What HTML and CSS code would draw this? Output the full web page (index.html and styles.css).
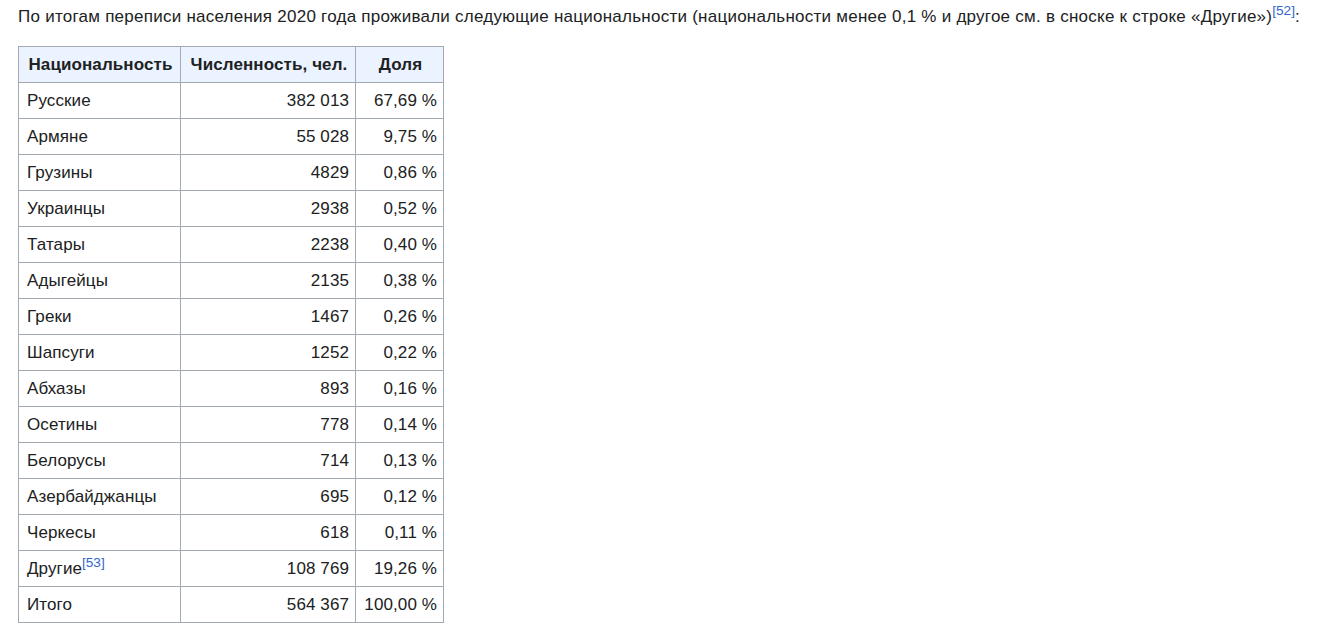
FILE: index.html
```html
<!DOCTYPE html>
<html lang="ru">
  <head>
    <meta charset="UTF-8" />
    <title>Национальный состав</title>
    <link rel="stylesheet" href="styles.css">
  </head>
  <body>
    <p class="lead">
      По итогам переписи населения 2020 года проживали следующие национальности (национальности менее 0,1 % и другое см. в сноске к строке «Другие»)<sup class="ref"><a href="#">[52]</a></sup>:
    </p>
    <table class="wikitable">
      <thead>
        <tr>
          <th class="col-name">Национальность</th>
          <th class="col-count">Численность, чел.</th>
          <th class="col-share">Доля</th>
        </tr>
      </thead>
      <tbody>
        <tr><td>Русские</td><td class="num">382 013</td><td class="num">67,69 %</td></tr>
        <tr><td>Армяне</td><td class="num">55 028</td><td class="num">9,75 %</td></tr>
        <tr><td>Грузины</td><td class="num">4829</td><td class="num">0,86 %</td></tr>
        <tr><td>Украинцы</td><td class="num">2938</td><td class="num">0,52 %</td></tr>
        <tr><td>Татары</td><td class="num">2238</td><td class="num">0,40 %</td></tr>
        <tr><td>Адыгейцы</td><td class="num">2135</td><td class="num">0,38 %</td></tr>
        <tr><td>Греки</td><td class="num">1467</td><td class="num">0,26 %</td></tr>
        <tr><td>Шапсуги</td><td class="num">1252</td><td class="num">0,22 %</td></tr>
        <tr><td>Абхазы</td><td class="num">893</td><td class="num">0,16 %</td></tr>
        <tr><td>Осетины</td><td class="num">778</td><td class="num">0,14 %</td></tr>
        <tr><td>Белорусы</td><td class="num">714</td><td class="num">0,13 %</td></tr>
        <tr><td>Азербайджанцы</td><td class="num">695</td><td class="num">0,12 %</td></tr>
        <tr><td>Черкесы</td><td class="num">618</td><td class="num">0,11 %</td></tr>
        <tr><td>Другие<sup class="ref"><a href="#">[53]</a></sup></td><td class="num">108 769</td><td class="num">19,26 %</td></tr>
        <tr><td>Итого</td><td class="num">564 367</td><td class="num">100,00 %</td></tr>
      </tbody>
    </table>
  </body>
</html>
```

FILE: styles.css
```css
* {
  box-sizing: border-box;
}
html,
body {
  margin: 0;
  background: #fff;
}
body {
  padding: 4px 18px 0;
  font-family: "Liberation Sans", Arial, sans-serif;
  font-size: 17px;
  letter-spacing: 0.25px;
  line-height: 25px;
  color: #202122;
}

.lead {
  margin: 0 0 17px;
}

.ref {
  font-size: 0.8em;
  line-height: 1;
  vertical-align: super;
  letter-spacing: 0;
}
.ref a {
  color: #3366cc;
  text-decoration: none;
}

.wikitable {
  border-collapse: collapse;
  border: 1px solid #a2a9b1;
  background: #fff;
  color: #202122;
  letter-spacing: 0.1px;
}
.wikitable th,
.wikitable td {
  border: 1px solid #a2a9b1;
  padding: 5px 6px 5px 8px;
  height: 36px;
  line-height: 25px;
  white-space: nowrap;
}
.wikitable th {
  background: #eaf3ff;
  font-weight: bold;
  text-align: center;
}
.wikitable td {
  text-align: left;
}
.wikitable td.num {
  text-align: right;
}
.col-name {
  width: 162px;
}
.col-count {
  width: 175px;
}
.col-share {
  width: 88px;
}
```
